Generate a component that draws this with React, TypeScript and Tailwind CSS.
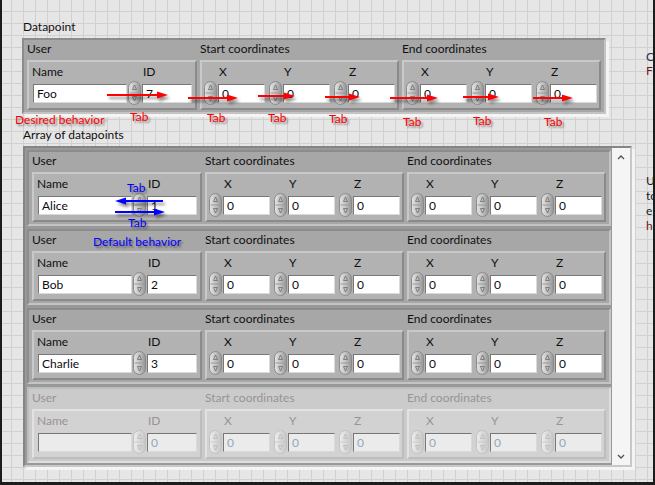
import React from "react";

const FONT = "font-[family-name:Lato,Liberation_Sans,sans-serif]";

const Spinner = ({ off }: { off?: boolean }) => {
  const gid = off ? "spOff" : "spOn";
  const ink = off ? "#b8b8b8" : "#6c6c6c";
  return (
    <svg width="13" height="24" viewBox="0 0 13 24" className="shrink-0">
      <defs>
        <linearGradient id={gid} x1="0" y1="0" x2="1" y2="0">
          <stop offset="0" stopColor={off ? "#eeeeee" : "#e6e6e6"} />
          <stop offset="0.55" stopColor={off ? "#d8d8d8" : "#bebebe"} />
          <stop offset="1" stopColor={off ? "#c6c6c6" : "#949494"} />
        </linearGradient>
      </defs>
      <rect x="0.5" y="0.5" width="12" height="23" rx="6" fill={`url(#${gid})`} stroke={off ? "#c2c2c2" : "#8a8a8a"} />
      <line x1="1.5" y1="12" x2="11.5" y2="12" stroke={off ? "#cacaca" : "#9a9a9a"} />
      <path d="M4.5 8.5 L6.5 4 L8.5 8.5 Z" fill="none" stroke={ink} strokeWidth="0.8" />
      <path d="M4.5 15.5 L6.5 20 L8.5 15.5 Z" fill="none" stroke={ink} strokeWidth="0.8" />
    </svg>
  );
};

const Box = ({ w, value, off }: { w: string; value: string; off?: boolean }) => (
  <div
    className={`${w} h-[19px] border border-t-[#777] border-l-[#777] border-b-[#dadada] border-r-[#dadada] pl-[3px] leading-[17px] ${
      off ? "bg-[#ebebeb] text-[#97a6bb]" : "bg-white text-[#0c0c14]"
    }`}
  >
    {value}
  </div>
);

const NumCtl = ({ label, value, off, w }: { label: string; value: string; off?: boolean; w: string }) => (
  <div className="flex flex-col">
    <div className={`h-[16px] leading-[16px] pl-[15px] ${off ? "text-[#9a9393]" : "text-[#101010]"}`}>{label}</div>
    <div className="mt-[1px] h-[24px] flex items-center gap-[1px]">
      <Spinner off={off} />
      <Box w={w} value={value} off={off} />
    </div>
  </div>
);

const Group = ({
  label,
  w,
  off,
  pad,
  gap,
  children,
}: {
  label: string;
  w: string;
  off?: boolean;
  pad: string;
  gap: string;
  children: React.ReactNode;
}) => (
  <div className={`flex flex-col ${w}`}>
    <div className={`h-[18px] leading-[18px] ${off ? "text-[#9a9393]" : "text-[#101010]"}`}>{label}</div>
    <div
      className={`mt-[2px] h-[50px] border-2 flex ${pad} ${gap} pt-[2px] ${
        off
          ? "bg-[#d2d2d2] border-t-[#e2e2e2] border-l-[#e2e2e2] border-b-[#bdbdbd] border-r-[#bdbdbd]"
          : "bg-[#b2b2b2] border-t-[#c9c9c9] border-l-[#c9c9c9] border-b-[#8a8a8a] border-r-[#8a8a8a]"
      }`}
    >
      {children}
    </div>
  </div>
);

const Datapoint = ({ name, id, off }: { name: string; id: string; off?: boolean }) => (
  <div
    className={`flex gap-[3px] border-2 px-[3px] pb-[2px] ${
      off
        ? "bg-[#cbcbcb] border-t-[#bdbdbd] border-l-[#bdbdbd] border-b-[#dedede] border-r-[#dedede]"
        : "bg-[#a7a7a7] border-t-[#8c8c8c] border-l-[#8c8c8c] border-b-[#c4c4c4] border-r-[#c4c4c4]"
    }`}
  >
    <Group label="User" w="w-[170px]" off={off} pad="pl-[4px]" gap="gap-[1px]">
      <div className="flex flex-col">
        <div className={`h-[16px] leading-[16px] -ml-[1px] ${off ? "text-[#9a9393]" : "text-[#101010]"}`}>Name</div>
        <div className="mt-[1px] h-[24px] flex items-center">
          <Box w="w-[94px]" value={name} off={off} />
        </div>
      </div>
      <NumCtl label="ID" value={id} off={off} w="w-[50px]" />
    </Group>
    <Group label="Start coordinates" w="w-[199px]" off={off} pad="pl-[2px]" gap="gap-[4px]">
      <NumCtl label="X" value="0" off={off} w="w-[47px]" />
      <NumCtl label="Y" value="0" off={off} w="w-[47px]" />
      <NumCtl label="Z" value="0" off={off} w="w-[47px]" />
    </Group>
    <Group label="End coordinates" w="w-[199px]" off={off} pad="pl-[2px]" gap="gap-[4px]">
      <NumCtl label="X" value="0" off={off} w="w-[47px]" />
      <NumCtl label="Y" value="0" off={off} w="w-[47px]" />
      <NumCtl label="Z" value="0" off={off} w="w-[47px]" />
    </Group>
  </div>
);

// annotation data, in page pixels
const redArrows = [
  [107, 168, 95],
  [188, 238, 98],
  [258, 295, 96],
  [325, 360, 97],
  [390, 438, 98],
  [463, 499, 97],
  [533, 573, 98],
];
const redTabs = [
  [130, 117],
  [207, 118],
  [268, 118],
  [329, 119],
  [403, 122],
  [473, 121],
  [544, 122],
];

const Arrow = ({ x1, x2, y, color, left }: { x1: number; x2: number; y: number; color: string; left?: boolean }) => {
  const w = x2 - x1;
  return (
    <svg
      className="absolute drop-shadow-[2px_3px_1.5px_rgba(0,0,0,0.45)]"
      style={{ left: x1 - 2, top: y - 5 }}
      width={w}
      height={10}
      viewBox={`0 0 ${w} 10`}
    >
      {left ? (
        <>
          <line x1={9} y1={5} x2={w} y2={5} stroke={color} strokeWidth={2} />
          <polygon points={`0,5 11,1.5 11,8.5`} fill={color} />
        </>
      ) : (
        <>
          <line x1={0} y1={5} x2={w - 9} y2={5} stroke={color} strokeWidth={2} />
          <polygon points={`${w},5 ${w - 11},1.5 ${w - 11},8.5`} fill={color} />
        </>
      )}
    </svg>
  );
};

const Note = ({ x, cy, color, children }: { x: number; cy: number; color: string; children: React.ReactNode }) => (
  <div
    className={`absolute h-[16px] leading-[16px] whitespace-nowrap [text-shadow:2px_2px_2px_rgba(0,0,0,0.4)] ${color}`}
    style={{ left: x - 2, top: cy - 8 }}
  >
    {children}
  </div>
);

const Chevron = ({ down }: { down?: boolean }) => (
  <svg width="8" height="5" viewBox="0 0 8 5">
    <path d={down ? "M1 1 L4 4 L7 1" : "M1 4 L4 1 L7 4"} fill="none" stroke="#555" strokeWidth="1.4" />
  </svg>
);

export default function App() {
  return (
    <div
      className={`relative w-[655px] h-[485px] overflow-hidden border-l-2 border-r-2 border-b-[3px] border-[#1c1c1c] bg-[#e6e6e6] bg-[linear-gradient(to_right,#d0d0d0_1px,transparent_1px),linear-gradient(to_bottom,#d0d0d0_1px,transparent_1px)] bg-[size:12px_12px] bg-[position:9px_11px] pl-[20px] pt-[19px] text-[12px] ${FONT}`}
    >
      <div className="pl-[1px] h-[16px] leading-[16px] text-[#101010]">Datapoint</div>
      <div className="mt-[3px] w-fit shadow-[3px_3px_0_#f4f4f4]">
        <Datapoint name="Foo" id="7" />
      </div>

      <div className="mt-[13px] pl-[1px] h-[16px] leading-[16px] text-[#101010]">Array of datapoints</div>
      <div className="mt-[3px] ml-[1px] w-fit flex border-2 border-t-[#858585] border-l-[#858585] border-b-[#c8c8c8] border-r-[#c8c8c8] bg-[#999999] shadow-[3px_3px_0_#f4f4f4]">
        <div className="flex flex-col gap-[3px] pl-[2px] py-[2px]">
          <Datapoint name="Alice" id="1" />
          <Datapoint name="Bob" id="2" />
          <Datapoint name="Charlie" id="3" />
          <Datapoint name="" id="0" off />
        </div>
        <div className="ml-[1px] w-[18px] bg-[#f5f5f5] flex flex-col items-center justify-between pt-[7px] pb-[6px]">
          <Chevron />
          <Chevron down />
        </div>
      </div>

      {/* comments cut off at the right edge of the panel */}
      <div className="absolute left-[644px] top-[50px] text-[12px] leading-[14px]">
        <div className="h-[14px] text-[#1f2d5c]">C</div>
        <div className="h-[14px] text-[#6e1a1a]">F</div>
      </div>
      <div className="absolute left-[644px] top-[173px] text-[12px] leading-[15px] text-[#202020]">
        <div className="h-[15px]">U</div>
        <div className="h-[15px]">to</div>
        <div className="h-[15px]">e</div>
        <div className="h-[15px] text-[#6e1a1a]">h</div>
      </div>

      {/* red: desired behaviour */}
      {redArrows.map(([a, b, y], i) => (
        <Arrow key={i} x1={a} x2={b} y={y} color="#ff0000" />
      ))}
      {redTabs.map(([x, y], i) => (
        <Note key={i} x={x} cy={y} color="text-[#ff0000]">
          Tab
        </Note>
      ))}
      <Note x={15} cy={120} color="text-[#ff0000]">
        Desired behavior
      </Note>

      {/* blue: default behaviour */}
      <Note x={127} cy={188} color="text-[#0000ff]">
        Tab
      </Note>
      <Arrow x1={115} x2={163} y={201} color="#0000ff" left />
      <Arrow x1={115} x2={165} y={212} color="#0000ff" />
      <Note x={128} cy={223} color="text-[#0000ff]">
        Tab
      </Note>
      <Note x={93} cy={242} color="text-[#0000ff]">
        Default behavior
      </Note>
    </div>
  );
}
